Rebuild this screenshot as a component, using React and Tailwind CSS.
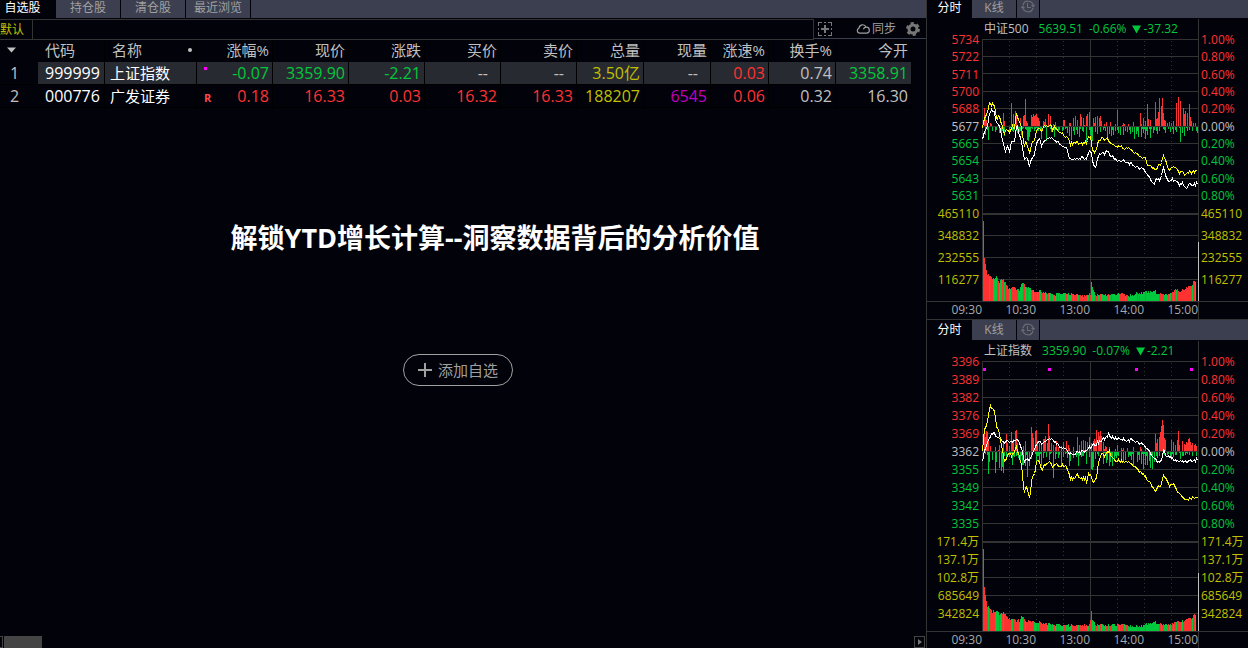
import { useState } from "react";
import clsx from "clsx";

const COLUMNS = [
  { label: "代码", width: "w-[67px]" },
  { label: "名称", width: "w-[92px]" },
  { label: "涨幅%", width: "w-[76px]" },
  { label: "现价", width: "w-[76px]" },
  { label: "涨跌", width: "w-[76px]" },
  { label: "买价", width: "w-[76px]" },
  { label: "卖价", width: "w-[76px]" },
  { label: "总量", width: "w-[67px]" },
  { label: "现量", width: "w-[67px]" },
  { label: "涨速%", width: "w-[58px]" },
  { label: "换手%", width: "w-[67px]" },
  { label: "今开", width: "w-[76px]" },
];

const TONES = {
  up: "text-[#ff3232]",
  down: "text-[#00c83c]",
  flat: "text-[#c0c0c0]",
  volume: "text-[#c0c000]",
  last: "text-[#c000c0]",
};

const STOCKS = [
  {
    code: "999999",
    name: "上证指数",
    mark: "dot",
    cells: [
      ["-0.07", "down"],
      ["3359.90", "down"],
      ["-2.21", "down"],
      ["--", "flat"],
      ["--", "flat"],
      ["3.50亿", "volume"],
      ["--", "flat"],
      ["0.03", "up"],
      ["0.74", "flat"],
      ["3358.91", "down"],
    ],
  },
  {
    code: "000776",
    name: "广发证券",
    mark: "R",
    cells: [
      ["0.18", "up"],
      ["16.33", "up"],
      ["0.03", "up"],
      ["16.32", "up"],
      ["16.33", "up"],
      ["188207", "volume"],
      ["6545", "last"],
      ["0.06", "up"],
      ["0.32", "flat"],
      ["16.30", "flat"],
    ],
  },
];

const PERCENTS = ["1.00%", "0.80%", "0.60%", "0.40%", "0.20%", "0.00%", "0.20%", "0.40%", "0.60%", "0.80%"];

// Chart series are kept at a third of a pixel: x starts at 175, y is shifted by `offset`
const CSI500 = {
  name: "中证500",
  price: "5639.51",
  percent: "-0.66%",
  change: "-37.32",
  prices: ["5734", "5722", "5711", "5700", "5688", "5677", "5665", "5654", "5643", "5631"],
  volumes: ["465110", "348832", "232555", "116277"],
  height: 263,
  grid: [0, 17, 34, 52, 69, 87, 104, 121, 139, 156, 196, 218, 240],
  thick: 175,
  base: 87,
  offset: 51,
  closeTop: 203,
  dots: [],
  average:
    "176,110 181,85 190,60 197,35 200,48 206,38 210,45 213,60 218,90 224,72 230,90 236,110 240,135 246,118 252,120 258,125 263,105 270,115 278,68 284,95 290,100 296,140 301,165 306,150 312,175 317,187 324,155 330,150 338,120 344,108 352,122 360,108 370,105 378,103 385,115 392,110 400,120 412,128 420,135 430,140 438,160 448,155 460,157 475,160 488,155 494,138 500,140 505,178 511,185 516,178 522,152 532,142 542,148 549,140 556,155 570,165 580,170 590,165 600,175 612,173 622,178 632,190 645,193 655,203 662,200 670,220 680,228 690,237 700,230 710,222 718,196 726,215 733,237 745,232 760,235 766,250 775,240 782,252 792,245 803,246 812,241 822,240",
  line:
    "176,145 182,120 190,110 196,65 206,58 211,65 216,95 221,100 228,110 236,155 243,185 250,172 257,180 263,150 270,160 278,95 284,130 290,140 296,180 302,208 308,200 316,230 322,205 330,195 338,155 346,148 353,168 362,152 376,142 390,150 404,158 414,170 428,172 438,208 450,202 460,208 475,202 487,205 492,185 500,180 506,220 514,232 522,195 532,186 540,192 550,180 556,192 570,203 583,213 595,208 610,215 630,225 645,232 655,235 665,245 675,260 690,282 698,262 708,268 717,232 724,250 733,275 745,268 758,272 766,285 775,278 784,292 795,282 810,283 822,277",
  rises:
    "181,18 184,9 187,6 199,3 204,2 240,13 243,5 262,23 268,12 274,15 277,13 290,8 298,10 301,11 304,27 307,5 310,3 322,11 325,9 328,12 331,10 334,11 337,12 340,9 343,8 346,5 358,5 366,7 374,12 380,10 418,6 422,6 440,3 448,8 456,10 460,6 470,12 474,9 480,8 488,10 492,12 498,14 508,8 512,3 516,9 522,10 526,8 530,10 534,5 548,4 560,4 582,16 602,2 614,2 650,13 660,8 664,5 670,22 674,7 680,6 694,24 698,7 702,8 705,14 708,28 712,20 715,28 718,13 722,6 726,5 732,3 738,4 744,3 750,5 757,23 763,29 770,25 778,18 782,12 786,15 790,13 796,22 800,9 804,5 810,3 816,3",
  falls:
    "186,8 193,13 205,4 216,5 226,6 234,9 242,9 256,4 270,5 280,6 288,5 294,8 310,13 313,14 316,10 319,5 332,4 352,12 368,14 382,5 392,10 404,5 416,4 430,6 436,9 444,13 452,8 462,7 468,10 478,5 488,15 500,8 504,13 507,14 515,5 522,7 530,5 540,3 552,10 558,7 564,9 570,8 576,4 585,6 590,8 600,8 606,4 612,5 620,7 626,5 632,12 638,7 645,10 652,10 660,6 664,12 672,8 680,11 690,6 700,7 724,6 740,5 750,7 758,5 769,15 776,6 782,9 790,4 822,6",
  turnover:
    "178,80 181,43 185,35 189,27 197,25 207,22 217,25 225,18 235,22 245,19 252,12 265,13 275,13 285,10 293,18 300,18 305,14 320,12 330,9 350,10 360,8 390,6 420,8 440,7 460,6 480,5 490,7 499,6 502,18 506,13 512,7 530,6 550,7 570,6 590,7 605,5 625,6 640,8 665,9 690,10 700,8 720,7 735,7 745,9 755,12 765,9 775,11 785,13 795,14 805,17 813,20 817,20",
  // stretches of the session that are mostly rising; the rest is mostly falling
  upRuns: [[175, 194], [197, 206], [220, 228], [244, 256], [262, 282], [305, 312], [320, 328], [345, 362], [448, 500], [514, 532], [585, 602], [712, 722], [740, 814]],
};

const SSE = {
  name: "上证指数",
  price: "3359.90",
  percent: "-0.07%",
  change: "-2.21",
  prices: ["3396", "3389", "3382", "3376", "3369", "3362", "3355", "3349", "3342", "3335"],
  volumes: ["171.4万", "137.1万", "102.8万", "685649", "342824"],
  height: 271,
  grid: [0, 18, 36, 54, 72, 90, 108, 126, 144, 162, 198, 216, 234, 252],
  thick: 181,
  base: 90,
  offset: -21,
  closeTop: 212,
  dots: [1, 66, 153, 208],
  average:
    "176,330 180,270 188,250 192,225 199,200 204,208 208,203 213,225 216,255 222,265 228,290 236,335 242,372 250,345 256,335 262,345 270,335 277,322 284,345 292,370 297,430 301,455 308,435 312,460 317,470 324,410 332,395 338,360 344,355 353,390 362,375 375,360 386,380 395,370 408,378 425,373 438,412 450,412 460,402 470,415 486,415 488,428 493,400 500,405 508,428 517,410 524,360 530,340 540,345 554,330 562,348 575,362 592,362 605,365 620,368 632,380 645,390 658,402 670,415 680,432 691,450 700,442 710,438 717,405 726,415 735,435 748,432 758,450 770,465 790,478 805,472 822,470",
  line:
    "176,362 182,325 188,315 195,290 209,272 214,285 220,290 230,295 240,310 248,305 258,300 265,308 277,292 286,305 294,330 300,362 308,355 315,365 322,345 335,315 345,305 355,312 365,302 378,295 392,305 403,315 412,325 425,325 438,340 455,338 470,335 485,332 494,320 502,325 508,310 512,318 520,305 535,298 547,290 553,282 562,292 575,295 590,295 605,298 620,298 635,302 650,310 660,315 670,325 680,340 692,355 703,365 712,358 719,328 725,345 735,350 750,358 760,362 775,362 790,362 800,360 822,356",
  rises:
    "181,23 184,14 188,20 191,19 194,10 200,5 214,4 226,6 240,8 247,17 252,8 256,5 262,19 266,8 270,12 274,20 277,21 281,8 298,5 306,10 322,24 326,18 330,13 334,20 338,21 342,10 346,8 352,7 358,12 362,12 366,15 370,8 374,27 377,15 382,8 388,6 398,10 404,4 412,5 420,9 428,10 434,6 450,4 460,14 466,6 472,10 478,11 484,10 490,9 496,14 502,8 508,10 512,12 516,10 519,21 523,19 526,15 530,20 534,15 538,9 544,5 548,4 556,4 582,6 594,3 610,3 650,4 666,3 694,17 698,8 702,12 706,14 709,19 712,25 715,31 718,26 721,13 724,11 742,11 748,9 754,6 760,11 763,20 768,6 775,10 782,7 785,6 788,9 791,8 794,12 797,13 801,9 804,6 807,8 812,6 815,7 818,5",
  falls:
    "180,3 194,22 198,10 206,8 214,21 218,10 228,16 232,19 236,15 240,21 248,8 258,5 266,13 272,5 284,6 290,10 295,13 300,13 306,14 312,25 318,14 324,7 338,12 346,10 352,14 360,6 368,5 376,8 388,26 394,7 404,6 412,14 420,5 430,6 436,14 440,9 448,6 458,5 464,14 474,5 480,4 488,12 496,5 502,17 506,18 510,15 516,7 524,4 540,12 548,11 552,8 556,14 560,10 566,14 572,9 578,6 584,4 592,9 598,9 606,8 614,5 622,8 630,14 640,10 646,8 652,12 658,17 664,13 670,13 676,9 680,16 686,17 692,10 700,6 730,3 742,8 750,5 758,3 770,7 778,4 786,3",
  turnover:
    "178,82 181,44 185,33 190,25 197,22 205,19 216,21 228,16 235,18 245,17 252,12 270,11 287,10 292,15 300,13 306,9 315,10 325,9 335,8 347,9 360,7 390,6 430,6 460,5 497,6 502,19 505,11 512,7 530,6 550,6 590,6 620,5 650,5 670,7 690,9 710,7 740,7 755,9 770,9 785,11 798,13 806,14 813,17 817,17",
  upRuns: [[175, 192], [196, 214], [238, 262], [268, 286], [310, 346], [350, 375], [420, 428], [450, 504], [514, 530], [545, 560], [580, 600], [714, 722], [740, 770], [778, 812]],
};

const parse = (text) => text.split(" ").map((pair) => pair.split(",").map(Number));

// repeatable noise between 0 and 1
const noise = (n) => {
  const v = Math.sin(n * 12.9898) * 43758.5453;
  return v - Math.floor(v);
};

const valueAt = (points, x) => {
  const next = points.findIndex((p) => p[0] >= x);
  if (next === -1) return points[points.length - 1][1];
  if (next === 0) return points[0][1];
  const [x0, y0] = points[next - 1];
  const [x1, y1] = points[next];
  return y0 + ((y1 - y0) * (x - x0)) / (x1 - x0);
};

const tracePath = (text, offset, seed) => {
  const points = parse(text);
  let d = "";
  for (let x = 0; x <= 215; x++) {
    const jitter = (noise(x + seed) - 0.5) * 3;
    const y = Math.round(valueAt(points, 175 + x * 3) / 3 + offset + jitter);
    d += `${x ? "L" : "M"}${x + 0.5} ${y + 0.5}`;
  }
  return d;
};

const spikePath = (text, base, direction, seed, filler) => {
  const heights = {};
  for (let x = 1; x < 215; x++) {
    if (noise(x + seed) < filler) heights[x] = 1 + Math.floor(noise(x * 3 + seed) * 4);
  }
  parse(text).forEach(([x, h]) => {
    heights[Math.round((x - 176) / 3)] = h;
  });
  return Object.entries(heights)
    .map(([x, h]) => `M${Number(x) + 0.5} ${base}v${h * direction}`)
    .join("");
};

const turnoverPath = (data, rising) => {
  const points = parse(data.turnover);
  let d = "";
  for (let x = 1; x <= 213; x++) {
    const at = 175 + x * 3;
    let isUp = data.upRuns.some(([from, to]) => at >= from && at < to);
    if (x > 12 && noise(x + 7) < 0.18) isUp = !isUp;
    if (isUp !== rising) continue;
    const h = Math.round(valueAt(points, at) + (x > 4 ? (noise(x * 5) - 0.5) * 3 : 0));
    d += `M${x + 0.5} ${data.height - 1}v${-h}`;
  }
  return d;
};

const IndexPlot = ({ data }) => (
  <svg
    className="block w-full"
    height={data.height}
    viewBox={`0 0 217 ${data.height}`}
    preserveAspectRatio="none"
    shapeRendering="crispEdges"
    fill="none"
    role="img"
    aria-label={data.name}
  >
    <g stroke="#333333">
      {data.grid.map((y) => (
        <path key={y} d={`M0 ${y + 0.5}H217`} />
      ))}
      <path d={`M0 ${data.thick}H217`} strokeWidth="2" />
      <path d={`M0 ${data.height - 0.5}H217`} />
      <path d={`M0.5 0V${data.height}M108.5 0V${data.height}M216.5 0V${data.height}`} />
      {[27, 54, 81, 135, 162, 189].map((x) => (
        <path key={x} d={`M${x + 0.5} 2V${data.height}`} strokeDasharray="1 3" />
      ))}
    </g>
    <path d={spikePath(data.rises, data.base, -1, 11, 0.1)} stroke="#ff3232" />
    <path d={spikePath(data.falls, data.base + 1, 1, 29, 0.4)} stroke="#00c83c" />
    <path d={turnoverPath(data, true)} stroke="#ff3232" />
    <path d={turnoverPath(data, false)} stroke="#00c83c" />
    <path d={tracePath(data.line, data.offset, 3)} stroke="#ffffff" />
    <path d={tracePath(data.average, data.offset, 90)} stroke="#ffff00" />
    <path d={`M216.5 ${data.closeTop}V${data.height - 1}`} stroke="#c0c0c0" />
    {data.dots.map((x) => (
      <rect key={x} x={x} y="7" width="3" height="3" fill="#ff00ff" />
    ))}
  </svg>
);

const scaleTone = (i) => {
  if (i === 5) return TONES.flat;
  return i < 5 ? TONES.up : TONES.down;
};

const Scale = ({ prices, volumes, compact, className }) => (
  <div className={clsx("flex flex-col gap-0.5 pt-[13px] leading-4", className)}>
    <div className={clsx("flex flex-col justify-between", compact ? "h-[172px]" : "h-[178px]")}>
      {prices.map((p, i) => (
        <span key={i} className={scaleTone(i)}>{p}</span>
      ))}
    </div>
    <div className={clsx("flex flex-col justify-between text-[#c0c000]", compact ? "h-[82px]" : "h-[88px]")}>
      {volumes.map((v) => (
        <span key={v}>{v}</span>
      ))}
    </div>
  </div>
);

const HistoryIcon = () => (
  <svg width="14" height="13" viewBox="0 0 14 13" fill="none" stroke="#6b6d76" strokeWidth="1.2">
    <path d="M2 5A5.2 5.2 0 0 1 12.2 6.2M12 8A5.2 5.2 0 0 1 1.8 6.8" />
    <path d="M0.3 8L1.8 6.3L3.4 8M10.6 5L12.2 6.7L13.7 5" />
    <path d="M6.5 3V7.5H10" shapeRendering="crispEdges" strokeWidth="1" />
  </svg>
);

const IndexPanel = ({ data, compact }) => {
  const [view, setView] = useState("分时");

  return (
    <section className={clsx(!compact && "border-t border-[#333333]")}>
      <div className={clsx("flex bg-[#3c3f4f]", compact ? "h-[18px]" : "h-5")}>
        {["分时", "K线"].map((tab) => (
          <button
            key={tab}
            type="button"
            onClick={() => setView(tab)}
            className={clsx(
              "flex w-[45px] items-center justify-center",
              compact && "pb-0.5",
              view === tab ? "bg-[#02020a] text-white" : "border-r border-[#02020a] text-[#a0a0a0]"
            )}
          >
            {tab}
          </button>
        ))}
        <button
          type="button"
          aria-label="历史"
          className={clsx("flex w-[23px] items-center justify-center border-r border-[#02020a]", compact ? "pb-1.5" : "pb-0.5")}
        >
          <HistoryIcon />
        </button>
      </div>

      <div className="mt-px grid grid-cols-[55px_1fr_49px]">
        <Scale
          prices={data.prices}
          volumes={data.volumes}
          compact={compact}
          className="border-b border-[#333333] pr-[3px] text-right"
        />
        <div className="min-w-0">
          <h2 className="flex h-5 items-center border-r border-[#333333] pl-0.5 whitespace-nowrap text-[#00c83c]">
            <span className="mr-2.5 text-[#c0c0c0]">{data.name}</span>
            <span className="mr-1.5">{data.price}</span>
            <span className="mr-1.5">{data.percent}</span>
            <svg className="mr-0.5" width="9" height="9" viewBox="0 0 9 9" fill="currentColor">
              <path d="M0 0.5H9L4.5 8.5Z" />
            </svg>
            <span>{data.change}</span>
          </h2>
          <IndexPlot data={data} />
        </div>
        <Scale prices={PERCENTS} volumes={data.volumes} compact={compact} className="border-b border-[#333333] pl-0.5" />
      </div>

      {/* Session times, each ending on its grid line */}
      <div className="grid h-[17px] grid-cols-[55px_1fr_49px] text-[#a8a8a8]">
        <span className="text-right">09:30</span>
        <div className="grid grid-cols-4 border-r border-[#333333] text-right">
          <span>10:30</span>
          <span>13:00</span>
          <span>14:00</span>
          <span>15:00</span>
        </div>
      </div>
    </section>
  );
};

const Toolbar = () => (
  <div className="mt-px flex h-[21px] text-[#a0a0a0]">
    <div className="flex flex-1 border-y border-r border-[#333333]">
      <button type="button" className="w-[33px] border-r border-[#333333] pr-2 text-[#c0c000]">
        默认
      </button>
    </div>
    <div className="mb-px flex w-28 items-center border-b border-[#3c3f4f] pl-1">
      <button type="button" aria-label="添加分组">
        <svg width="14" height="14" viewBox="0 0 14 14" fill="none" stroke="#777777" shapeRendering="crispEdges">
          <path d="M0.5 4V0.5H4M6 0.5H8M10 0.5H13.5V4M13.5 6V8M13.5 10V13.5H10M8 13.5H6M4 13.5H0.5V10M0.5 8V6" />
          <path d="M7 3V11M3 7H11" strokeWidth="2" />
        </svg>
      </button>
      <button type="button" className="ml-6 flex items-center gap-0.5">
        <svg width="14" height="10" viewBox="0 0 14 10" fill="none" stroke="currentColor" strokeWidth="1.2">
          <path d="M3.5 9.2A2.6 2.6 0 0 1 3 4.2A3.6 3.6 0 0 1 10 3.2A3 3 0 0 1 10.6 9.2ZM10 3.2Q8 3.6 7.4 5.2" />
        </svg>
        同步
      </button>
      <button type="button" aria-label="设置" className="ml-2.5">
        <svg width="14" height="14" viewBox="0 0 14 14" fill="none" stroke="#777777">
          <circle cx="7" cy="7" r="4" strokeWidth="3" />
          <circle cx="7" cy="7" r="6" strokeWidth="2" strokeDasharray="3.14 3.14" />
        </svg>
      </button>
    </div>
  </div>
);

const StockTable = () => (
  <table className="w-[912px] table-fixed border-separate border-spacing-0 text-right text-[16px] leading-[22px] whitespace-nowrap">
    <thead className="text-[15px] leading-5 text-[#c0c0c0]">
      <tr className="h-[22px] align-top">
        <th className="w-[38px] p-0 pt-[7px]" aria-label="序号">
          <svg className="ml-[7px]" width="9" height="6" viewBox="0 0 9 6" fill="currentColor">
            <path d="M0 0.5H9L4.5 5.5Z" />
          </svg>
        </th>
        {COLUMNS.map((col, i) => (
          <th
            key={col.label}
            className={clsx("border-r border-black p-0 font-normal", col.width, i < 2 ? "pl-[7px] text-left" : "pr-[3px]")}
          >
            {i === 1 ? (
              <span className="flex items-center justify-between pr-1">
                {col.label}
                <span className="size-1 rounded-full bg-[#c0c0c0]" />
              </span>
            ) : (
              col.label
            )}
          </th>
        ))}
      </tr>
    </thead>
    <tbody>
      {STOCKS.map((stock, row) => (
        <tr key={stock.code} className="h-[23px]">
          <td className="border-b border-black p-0 pl-2.5 text-left text-[#c0c0c0]">{row + 1}</td>
          <td className={clsx("border-r border-b border-black p-0 pl-[7px] text-left text-white", row === 0 && "bg-[#282a32]")}>
            {stock.code}
          </td>
          <td
            className={clsx(
              "border-r border-b border-black p-0 pl-[5px] text-left text-[15px] text-white",
              row === 0 && "bg-[#282a32]"
            )}
          >
            {stock.name}
          </td>
          {stock.cells.map(([value, tone], i) => (
            <td
              key={i}
              className={clsx(
                "border-r border-b border-black p-0",
                value === "--" ? "pr-3" : "pr-[3px]",
                row === 0 && "bg-[#282a32]",
                TONES[tone]
              )}
            >
              {i === 0 ? (
                <span className="flex items-center justify-between pl-[7px]">
                  {stock.mark === "dot" ? (
                    <span className="mb-2.5 size-[3px] bg-[#ff00ff]" />
                  ) : (
                    <span className="pt-1 text-[11px] leading-4 font-bold text-[#ff4848]">R</span>
                  )}
                  {value}
                </span>
              ) : (
                value
              )}
            </td>
          ))}
        </tr>
      ))}
    </tbody>
  </table>
);

const GROUPS = [
  { label: "自选股", width: "w-14 pr-2.5" },
  { label: "持仓股", width: "w-[65px]" },
  { label: "清仓股", width: "w-[65px]" },
  { label: "最近浏览", width: "w-[65px]" },
];

const App = () => {
  const [group, setGroup] = useState("自选股");

  return (
    <div className="flex min-h-screen bg-[#02020a] font-['Open_Sans','Noto_Sans_CJK_SC',sans-serif] text-[12px] leading-4">
      <main className="flex min-w-0 flex-1 flex-col">
        <nav className="flex h-[18px] bg-[#3c3f4f]">
          {GROUPS.map(({ label, width }) => (
            <button
              key={label}
              type="button"
              onClick={() => setGroup(label)}
              className={clsx(
                "flex items-center justify-center border-r border-[#02020a] pb-0.5 whitespace-nowrap",
                width,
                group === label ? "bg-[#02020a] text-white" : "text-[#a0a0a0]"
              )}
            >
              {label}
            </button>
          ))}
        </nav>
        <Toolbar />
        <StockTable />

        <div className="flex flex-1 flex-col items-center pt-28">
          <h1 className="ml-16 text-[27px] leading-9 font-bold text-white">解锁YTD增长计算--洞察数据背后的分析价值</h1>
          <button
            type="button"
            className="mt-[98px] mr-2.5 flex h-8 w-[110px] items-center justify-center gap-1.5 rounded-full border border-[#a0a0a0] text-[15px] text-[#a0a0a0]"
          >
            <svg width="14" height="14" viewBox="0 0 14 14" stroke="currentColor" strokeWidth="2" shapeRendering="crispEdges">
              <path d="M7 0V14M0 7H14" />
            </svg>
            添加自选
          </button>
        </div>

        {/* Horizontal scroll strip */}
        <div className="mb-px flex h-3 items-stretch pr-px">
          <button type="button" aria-label="向左滚动" className="w-[3px] border-y border-r border-[#444444]" />
          <div className="ml-px w-[38px] bg-[#444444]" />
          <button
            type="button"
            aria-label="向右滚动"
            className="ml-auto flex w-[11px] items-center justify-center border border-[#444444]"
          >
            <svg width="4" height="6" viewBox="0 0 4 6" fill="#777777">
              <path d="M0 0L4 3L0 6Z" />
            </svg>
          </button>
        </div>
      </main>

      <aside className="w-[322px] shrink-0 border-l border-[#333333]">
        <IndexPanel data={CSI500} compact />
        <IndexPanel data={SSE} />
      </aside>
    </div>
  );
};

export default App;
